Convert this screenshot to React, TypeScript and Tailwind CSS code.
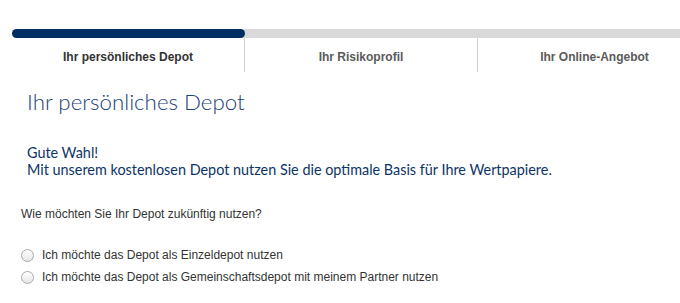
const steps = [
  { label: "Ihr persönliches Depot", active: true },
  { label: "Ihr Risikoprofil", active: false },
  { label: "Ihr Online-Angebot", active: false },
];

const options = [
  "Ich möchte das Depot als Einzeldepot nutzen",
  "Ich möchte das Depot als Gemeinschaftsdepot mit meinem Partner nutzen",
];

function Radio() {
  return (
    <span className="inline-block w-[13px] h-[13px] shrink-0 rounded-full border border-[#a9a9a9] bg-gradient-to-b from-[#ffffff] to-[#e6e6e6]" />
  );
}

export default function App() {
  return (
    <div className="w-[680px] h-[303px] overflow-hidden bg-white font-['Liberation_Sans',Arial,sans-serif]">
      {/* Fortschritt */}
      <div className="pl-[12px] pt-[29px] w-[711px]">
        <div className="h-[9px] bg-[#d9d9d9] rounded-l-full">
          <div className="h-full w-[233px] rounded-full bg-[#002e62]" />
        </div>
        <div className="grid grid-cols-3">
          {steps.map((s, i) => (
            <div
              key={s.label}
              className={`h-[34px] flex items-center justify-center pt-[3px] text-[12px] font-bold ${
                s.active ? "text-[#333333]" : "text-[#5a5a5a]"
              } ${i < 2 ? "border-r border-[#c9d2de]" : ""}`}
            >
              {s.label}
            </div>
          ))}
        </div>
      </div>

      <div className="pl-[27px] pt-[15px]">
        <h1 className="text-[22.3px] leading-[30px] font-light text-[#1b4177] font-['Lato',sans-serif]">
          Ihr persönliches Depot
        </h1>
        <div className="mt-[27px] text-[14.4px] leading-[17px] text-[#0d3466] font-['Lato',sans-serif]">
          <p>Gute Wahl!</p>
          <p>Mit unserem kostenlosen Depot nutzen Sie die optimale Basis für Ihre Wertpapiere.</p>
        </div>
      </div>

      <div className="pl-[21px] pt-[28px] text-[12px] text-[#333333]">
        <p className="leading-[16px]">Wie möchten Sie Ihr Depot zukünftig nutzen?</p>
        <div className="mt-[22px] flex flex-col">
          {options.map((o) => (
            <label key={o} className="flex items-center gap-[8px] h-[22px]">
              <Radio />
              <span>{o}</span>
            </label>
          ))}
        </div>
      </div>
    </div>
  );
}
